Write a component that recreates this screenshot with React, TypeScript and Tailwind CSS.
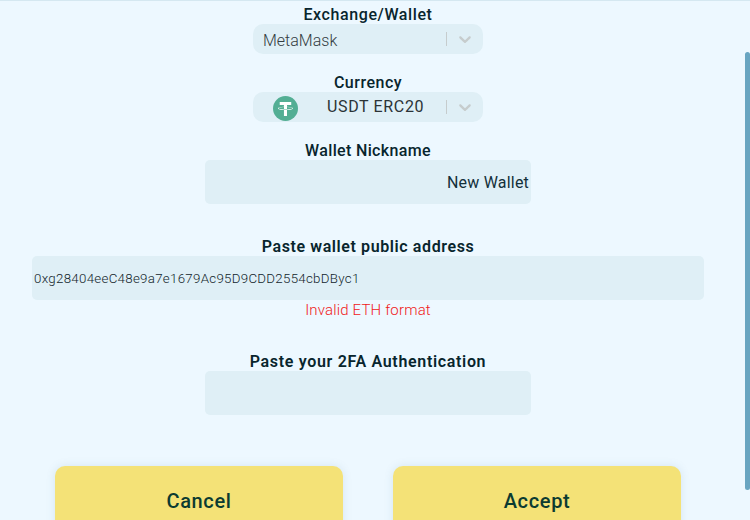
import React from 'react';

interface FieldProps {
  label: string;
  labelClass?: string;
  className?: string;
  children: React.ReactNode;
}

const Field: React.FC<FieldProps> = ({ label, labelClass = '', className = '', children }) => {
  return (
    <div className={`flex flex-col items-center ${className}`}>
      <label className={`h-5 text-[16px] leading-[22px] whitespace-nowrap text-[#08252d] ${labelClass}`}>{label}</label>
      {children}
    </div>
  );
};

const SelectBox: React.FC<{ children: React.ReactNode }> = ({ children }) => {
  return (
    <div className="flex h-[30px] w-[230px] items-center rounded-[10px] bg-[#dfeff6]">
      <div className="flex h-full flex-1 items-center">{children}</div>
      <span className="h-[14px] w-px bg-[#c6cccd]" />
      <div className="flex w-9 justify-center">
        <svg width="20" height="20" viewBox="0 0 20 20" fill="#c6cccd">
          <path d="M4.516 7.548c0.436-0.446 1.043-0.481 1.576 0l3.908 3.747 3.908-3.747c0.533-0.481 1.141-0.446 1.574 0 0.436 0.445 0.408 1.197 0 1.615-0.406 0.418-4.695 4.502-4.695 4.502-0.217 0.223-0.502 0.335-0.787 0.335s-0.57-0.112-0.789-0.335c0 0-4.287-4.084-4.695-4.502s-0.436-1.17 0-1.615z" />
        </svg>
      </div>
    </div>
  );
};

const TetherIcon: React.FC = () => {
  return (
    <svg width="25" height="25" viewBox="0 0 32 32">
      <circle cx="16" cy="16" r="16" fill="#53ae94" />
      <path
        fill="#fff"
        d="M17.922 17.383v-.002c-.11.008-.677.042-1.942.042-1.01 0-1.721-.03-1.971-.042v.003c-3.888-.171-6.79-.848-6.79-1.658 0-.809 2.902-1.486 6.79-1.66v2.644c.254.018.982.061 1.988.061 1.207 0 1.812-.05 1.925-.06v-2.643c3.88.173 6.775.85 6.775 1.658 0 .81-2.895 1.485-6.775 1.657m0-3.59v-2.366h5.414V7.819H8.595v3.608h5.414v2.365c-4.4.202-7.709 1.074-7.709 2.118 0 1.044 3.309 1.915 7.709 2.118v7.582h3.913v-7.584c4.393-.202 7.694-1.073 7.694-2.116 0-1.043-3.301-1.914-7.694-2.117"
      />
    </svg>
  );
};

export default function App() {
  return (
    <div className="flex h-[520px] w-[750px] overflow-hidden bg-[#edf8ff] font-['Roboto','Liberation_Sans',sans-serif]">
      <main className="flex w-[736px] shrink-0 flex-col items-center border-t border-[#d5e8f1] pt-[3px]">
        <Field label="Exchange/Wallet" labelClass="font-medium tracking-[0.6px]">
          <SelectBox>
            <span className="pt-1 pl-2.5 text-[16px] font-light text-[#333c3f]">MetaMask</span>
          </SelectBox>
        </Field>

        <Field label="Currency" labelClass="font-medium tracking-[0.5px]" className="mt-[18px]">
          <SelectBox>
            <div className="flex items-center pl-5">
              <span className="pt-[3px]">
                <TetherIcon />
              </span>
              <span className="pl-[29px] text-[16px] leading-5 tracking-[0.65px] whitespace-nowrap text-[#2b3336]">
                USDT ERC20
              </span>
            </div>
          </SelectBox>
        </Field>

        <Field label="Wallet Nickname" labelClass="font-medium tracking-[0.35px]" className="mt-[18px]">
          <div className="flex h-11 w-[326px] items-center justify-end rounded-[5px] bg-[#dfeff6] pt-0.5 pr-0.5 text-[16px] tracking-[0.2px] text-[#12303a]">
            New Wallet
          </div>
        </Field>

        <Field label="Paste wallet public address" labelClass="font-semibold tracking-[0.6px]" className="mt-8">
          <div className="flex h-11 w-[672px] items-center rounded-[5px] bg-[#dfeff6] pt-0.5 pl-0.5 text-[13.3px] font-light tracking-[0.29px] text-[#12252b]">
            0xg28404eeC48e9a7e1679Ac95D9CDD2554cbDByc1
          </div>
          <p className="h-5 text-[15px] leading-5 font-light tracking-[0.17px] text-[#f02020]">Invalid ETH format</p>
        </Field>

        <Field label="Paste your 2FA Authentication" labelClass="font-semibold tracking-[0.67px]" className="mt-[31px]">
          <div className="h-11 w-[326px] rounded-[5px] bg-[#dfeff6]" />
        </Field>

        <div className="mt-[51px] flex gap-[50px]">
          <button className="h-[70px] w-72 rounded-[10px] bg-[#f4e277] text-[20px] font-medium tracking-[0.65px] text-[#0b3b31] shadow-[0_0_10px_rgba(60,110,150,0.13)]">
            Cancel
          </button>
          <button className="h-[70px] w-72 rounded-[10px] bg-[#f4e277] text-[20px] font-medium tracking-[0.65px] text-[#0b3b31] shadow-[0_0_10px_rgba(60,110,150,0.13)]">
            Accept
          </button>
        </div>
      </main>

      <aside className="flex flex-1 justify-end border-t border-[#d5e8f1] pt-[51px]">
        <div className="h-[438px] w-[5px] rounded-t-[3px] rounded-b-[3px] bg-[#69a5c1]" />
      </aside>
    </div>
  );
}
